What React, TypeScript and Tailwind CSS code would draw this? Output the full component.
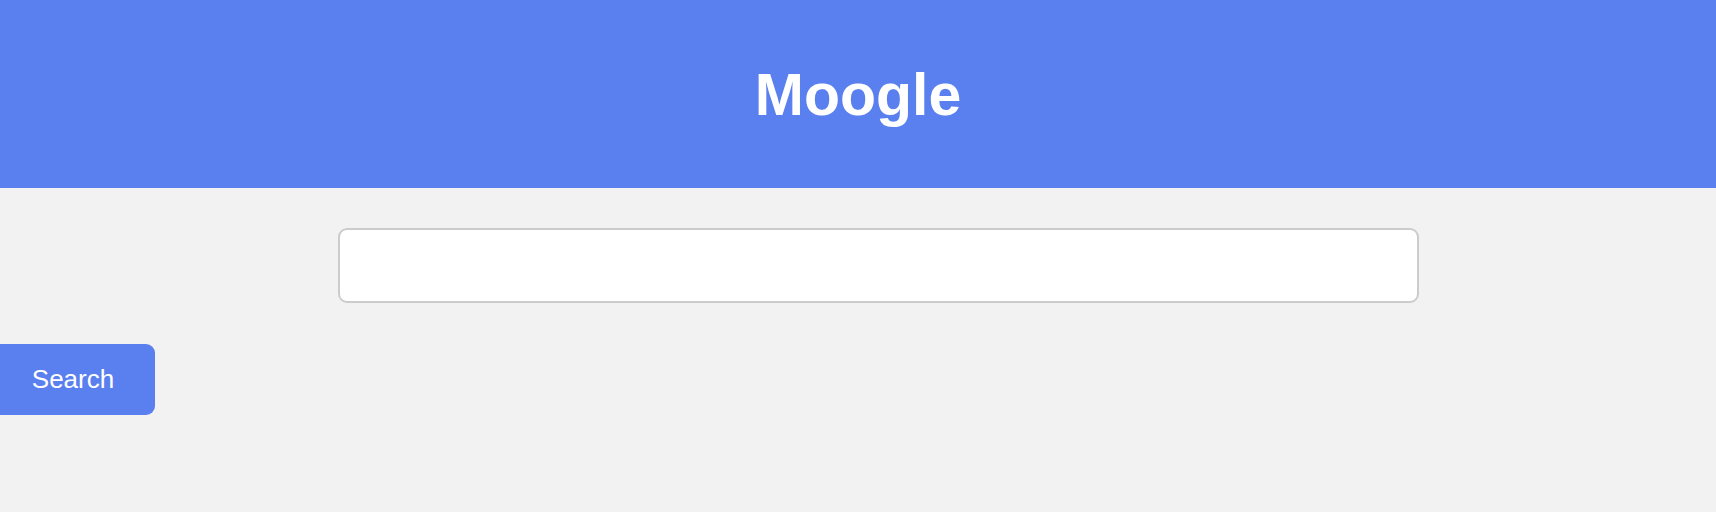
export default function App() {
  return (
    <div className="min-h-[512px] bg-[#f2f2f2] font-['Liberation_Sans',Arial,sans-serif]">
      {/* Header */}
      <header className="flex h-[188px] items-center justify-center bg-[#5a7fef]">
        <h1 className="mt-[2px] text-[59px] font-bold leading-none text-white">Moogle</h1>
      </header>

      {/* Search */}
      <main className="pt-[40px]">
        <input
          type="text"
          className="ml-[338px] block h-[75px] w-[1081px] rounded-[9px] border-2 border-[#cccccc] bg-white px-4 text-xl outline-none"
        />
        <button className="-ml-[9px] mt-[41px] block h-[71px] w-[164px] rounded-[9px] bg-[#5a7fef] text-[26px] text-white">
          Search
        </button>
      </main>
    </div>
  )
}
